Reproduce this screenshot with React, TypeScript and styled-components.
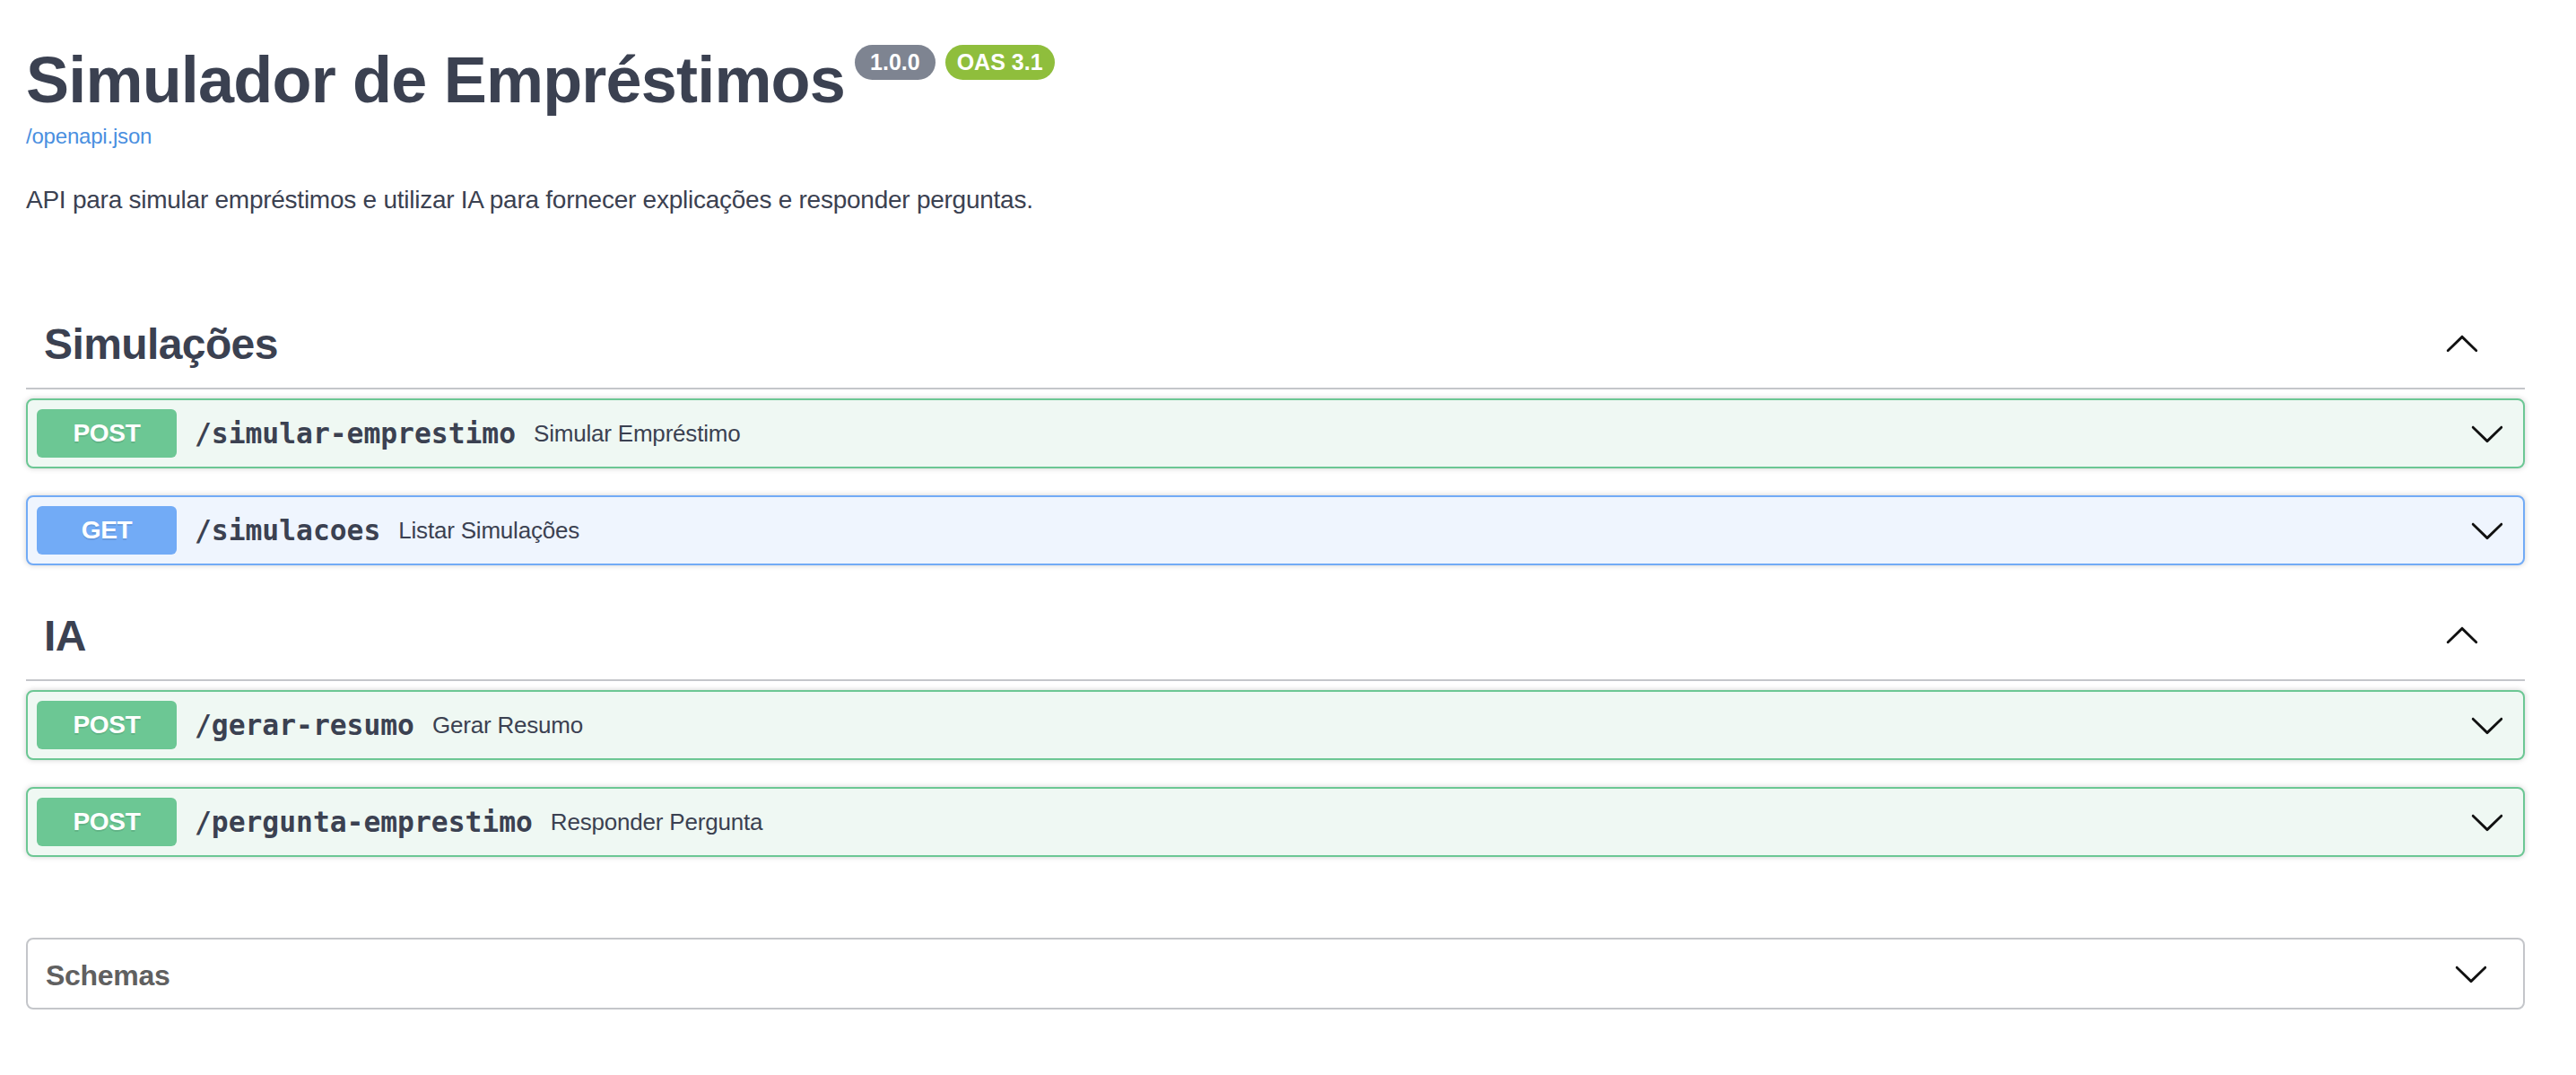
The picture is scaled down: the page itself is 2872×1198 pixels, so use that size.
import React from "react";
import styled, { createGlobalStyle, css } from "styled-components";

const GlobalStyle = createGlobalStyle`
  html, body {
    margin: 0;
    padding: 0;
    background: #ffffff;
  }
  body {
    font-family: "Liberation Sans", Arial, Helvetica, sans-serif;
    color: #3b4151;
  }
  * { box-sizing: border-box; }
`;

type Method = "post" | "get";

const methodColors: Record<Method, { main: string; bg: string }> = {
  post: { main: "#6cc794", bg: "#eff8f3" },
  get: { main: "#72abf6", bg: "#eff5fe" },
};

const Page = styled.div`
  padding: 48px 57px 60px 29px;
`;

const Info = styled.section`
  margin-bottom: 91px;
`;

const TitleRow = styled.h2`
  display: flex;
  align-items: flex-start;
  gap: 11px;
  margin: 0;
`;

const TitleText = styled.span`
  font-size: 72px;
  line-height: 83px;
  font-weight: 700;
  letter-spacing: -0.8px;
  color: #3b4151;
`;

const Badge = styled.small<{ $tone: "version" | "oas" }>`
  display: inline-block;
  margin-top: 2px;
  height: 39px;
  padding: 0 ${(p) => (p.$tone === "version" ? "17px" : "13px")};
  border-radius: 57px;
  font-size: 25px;
  line-height: 39px;
  font-weight: 700;
  color: #ffffff;
  background: ${(p) => (p.$tone === "version" ? "#7e8491" : "#8fbe3c")};
`;

const SpecLink = styled.a`
  display: block;
  margin-top: 7px;
  font-size: 24px;
  line-height: 28px;
  letter-spacing: -0.2px;
  color: #4a8fe0;
  text-decoration: none;
`;

const Description = styled.p`
  margin: 36px 0 0;
  font-size: 28px;
  line-height: 42px;
  letter-spacing: -0.25px;
  color: #3b4151;
`;

const TagSection = styled.section`
  display: flex;
  flex-direction: column;
`;

const TagHeading = styled.h3`
  display: flex;
  align-items: center;
  margin: 0 0 10px;
  padding: 20px 40px 20px 20px;
  border-bottom: 2px solid rgba(59, 65, 81, 0.3);
`;

const TagName = styled.span`
  flex: 1;
  font-size: 48px;
  line-height: 57px;
  font-weight: 700;
  letter-spacing: -0.6px;
  color: #3b4151;
`;

const ToggleButton = styled.button`
  display: flex;
  align-items: center;
  padding: 0 10px;
  margin: 0;
  border: none;
  background: none;
  cursor: pointer;
`;

const Opblock = styled.div<{ $method: Method }>`
  margin: 0 0 30px;
  border-radius: 8px;
  box-shadow: 0 0 6px rgba(0, 0, 0, 0.19);
  ${(p) => css`
    border: 2px solid ${methodColors[p.$method].main};
    background: ${methodColors[p.$method].bg};
  `}
`;

const Summary = styled.div`
  display: flex;
  align-items: center;
  padding: 10px;
`;

const MethodBadge = styled.span<{ $method: Method }>`
  flex: none;
  width: 156px;
  height: 54px;
  border-radius: 6px;
  background: ${(p) => methodColors[p.$method].main};
  color: #ffffff;
  font-size: 28px;
  font-weight: 700;
  line-height: 54px;
  letter-spacing: -0.3px;
  text-align: center;
  text-shadow: 0 2px 0 rgba(0, 0, 0, 0.1);
`;

const PathText = styled.span`
  padding: 0 20px;
  font-family: "DejaVu Sans Mono", "Liberation Mono", monospace;
  font-size: 31.3px;
  font-weight: 700;
  color: #3b4151;
  white-space: nowrap;
`;

const SummaryDesc = styled.span`
  flex: 1;
  font-size: 26px;
  letter-spacing: -0.2px;
  color: #3b4151;
`;

const ModelsBox = styled.section`
  margin-top: 60px;
  border: 2px solid rgba(59, 65, 81, 0.3);
  border-radius: 8px;
`;

const ModelsTitle = styled.h4`
  display: flex;
  align-items: center;
  margin: 0;
  padding: 22px 40px 18px 20px;
  font-size: 32px;
  line-height: 36px;
  font-weight: 700;
  letter-spacing: -0.3px;
  color: #606060;
`;

const ModelsLabel = styled.span`
  flex: 1;
`;

const ChevronSvg = styled.svg<{ $up?: boolean }>`
  display: block;
  width: 40px;
  height: 40px;
  fill: #111111;
  ${(p) => p.$up && "transform: rotate(180deg);"}
`;

const ModelsChevron = styled(ChevronSvg)`
  margin-top: -4px;
  margin-right: -2px;
`;

const chevronPath =
  "M17.418 6.109c.272-.268.709-.268.979 0s.271.701 0 .969l-7.908 7.83c-.27.268-.707.268-.979 0l-7.908-7.83c-.27-.268-.27-.701 0-.969.271-.268.709-.268.979 0L10 13.25l7.418-7.141z";

const Chevron: React.FC<{ up?: boolean }> = ({ up }) => (
  <ChevronSvg $up={up} viewBox="0 0 20 20" aria-hidden="true">
    <path d={chevronPath} />
  </ChevronSvg>
);

type Operation = { method: Method; path: string; summary: string };
type Tag = { name: string; operations: Operation[] };

const tags: Tag[] = [
  {
    name: "Simulações",
    operations: [
      { method: "post", path: "/simular-emprestimo", summary: "Simular Empréstimo" },
      { method: "get", path: "/simulacoes", summary: "Listar Simulações" },
    ],
  },
  {
    name: "IA",
    operations: [
      { method: "post", path: "/gerar-resumo", summary: "Gerar Resumo" },
      { method: "post", path: "/pergunta-emprestimo", summary: "Responder Pergunta" },
    ],
  },
];

export default function App() {
  return (
    <>
      <GlobalStyle />
      <Page>
        <Info>
          <TitleRow>
            <TitleText>Simulador de Empréstimos</TitleText>
            <Badge $tone="version">1.0.0</Badge>
            <Badge $tone="oas">OAS 3.1</Badge>
          </TitleRow>
          <SpecLink href="#">/openapi.json</SpecLink>
          <Description>
            API para simular empréstimos e utilizar IA para fornecer explicações e responder perguntas.
          </Description>
        </Info>

        {tags.map((tag) => (
          <TagSection key={tag.name}>
            <TagHeading>
              <TagName>{tag.name}</TagName>
              <ToggleButton aria-label="Collapse">
                <Chevron up />
              </ToggleButton>
            </TagHeading>
            {tag.operations.map((op) => (
              <Opblock key={op.path} $method={op.method}>
                <Summary>
                  <MethodBadge $method={op.method}>{op.method.toUpperCase()}</MethodBadge>
                  <PathText>{op.path}</PathText>
                  <SummaryDesc>{op.summary}</SummaryDesc>
                  <ToggleButton aria-label="Expand">
                    <Chevron />
                  </ToggleButton>
                </Summary>
              </Opblock>
            ))}
          </TagSection>
        ))}

        <ModelsBox>
          <ModelsTitle>
            <ModelsLabel>Schemas</ModelsLabel>
            <ModelsChevron viewBox="0 0 20 20" aria-hidden="true">
              <path d={chevronPath} />
            </ModelsChevron>
          </ModelsTitle>
        </ModelsBox>
      </Page>
    </>
  );
}
